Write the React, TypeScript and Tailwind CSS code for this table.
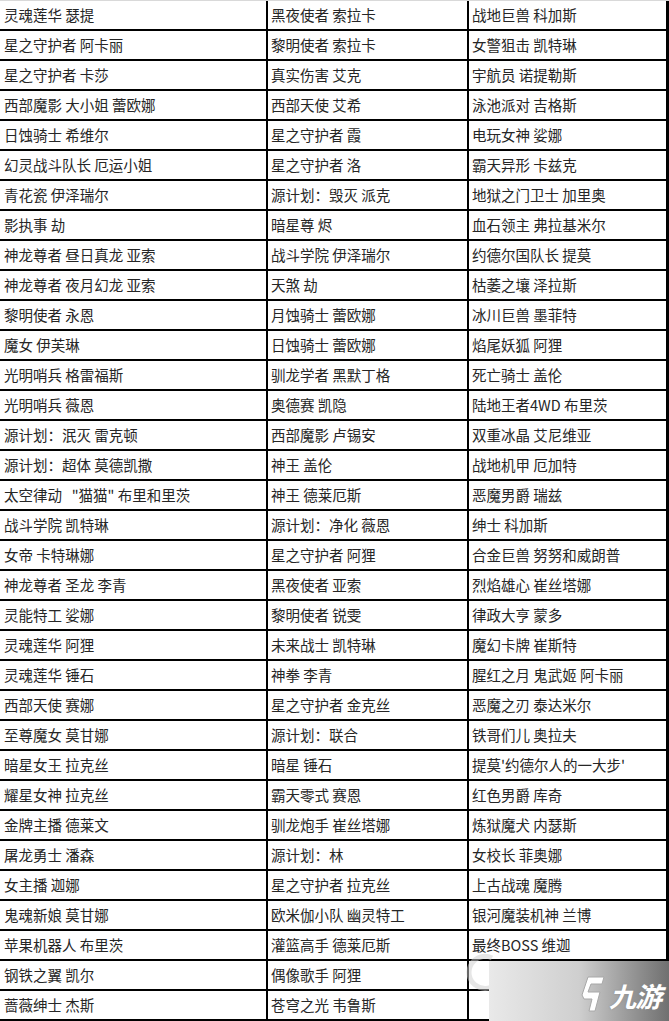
import React from "react";

const rows: [string, string, string][] = [
  ["灵魂莲华 瑟提", "黑夜使者 索拉卡", "战地巨兽 科加斯"],
  ["星之守护者 阿卡丽", "黎明使者 索拉卡", "女警狙击 凯特琳"],
  ["星之守护者 卡莎", "真实伤害 艾克", "宇航员 诺提勒斯"],
  ["西部魔影 大小姐 蕾欧娜", "西部天使 艾希", "泳池派对 吉格斯"],
  ["日蚀骑士 希维尔", "星之守护者 霞", "电玩女神 娑娜"],
  ["幻灵战斗队长 厄运小姐", "星之守护者 洛", "霸天异形 卡兹克"],
  ["青花瓷 伊泽瑞尔", "源计划：毁灭 派克", "地狱之门卫士 加里奥"],
  ["影执事 劫", "暗星尊 烬", "血石领主 弗拉基米尔"],
  ["神龙尊者 昼日真龙 亚索", "战斗学院 伊泽瑞尔", "约德尔国队长 提莫"],
  ["神龙尊者 夜月幻龙 亚索", "天煞 劫", "枯萎之壤 泽拉斯"],
  ["黎明使者 永恩", "月蚀骑士 蕾欧娜", "冰川巨兽 墨菲特"],
  ["魔女 伊芙琳", "日蚀骑士 蕾欧娜", "焰尾妖狐 阿狸"],
  ["光明哨兵 格雷福斯", "驯龙学者 黑默丁格", "死亡骑士 盖伦"],
  ["光明哨兵 薇恩", "奥德赛 凯隐", "陆地王者4WD 布里茨"],
  ["源计划：泯灭 雷克顿", "西部魔影 卢锡安", "双重冰晶 艾尼维亚"],
  ["源计划：超体 莫德凯撒", "神王 盖伦", "战地机甲 厄加特"],
  ["太空律动 \u00a0 \"猫猫\" 布里和里茨", "神王 德莱厄斯", "恶魔男爵 瑞兹"],
  ["战斗学院 凯特琳", "源计划：净化 薇恩", "绅士 科加斯"],
  ["女帝 卡特琳娜", "星之守护者 阿狸", "合金巨兽 努努和威朗普"],
  ["神龙尊者 圣龙 李青", "黑夜使者 亚索", "烈焰雄心 崔丝塔娜"],
  ["灵能特工 娑娜", "黎明使者 锐雯", "律政大亨 蒙多"],
  ["灵魂莲华 阿狸", "未来战士 凯特琳", "魔幻卡牌 崔斯特"],
  ["灵魂莲华 锤石", "神拳 李青", "腥红之月 鬼武姬 阿卡丽"],
  ["西部天使 赛娜", "星之守护者 金克丝", "恶魔之刃 泰达米尔"],
  ["至尊魔女 莫甘娜", "源计划：联合", "铁哥们儿 奥拉夫"],
  ["暗星女王 拉克丝", "暗星 锤石", "提莫'约德尔人的一大步'"],
  ["耀星女神 拉克丝", "霸天零式 赛恩", "红色男爵 库奇"],
  ["金牌主播 德莱文", "驯龙炮手 崔丝塔娜", "炼狱魔犬 内瑟斯"],
  ["屠龙勇士 潘森", "源计划：林", "女校长 菲奥娜"],
  ["女主播 迦娜", "星之守护者 拉克丝", "上古战魂 魔腾"],
  ["鬼魂新娘 莫甘娜", "欧米伽小队 幽灵特工", "银河魔装机神 兰博"],
  ["苹果机器人 布里茨", "灌篮高手 德莱厄斯", "最终BOSS 维迦"],
  ["钢铁之翼 凯尔", "偶像歌手 阿狸", ""],
  ["蔷薇绅士 杰斯", "苍穹之光 韦鲁斯", ""],
];

export default function App() {
  return (
    <div
      className="relative w-[669px] h-[1021px] overflow-hidden bg-white text-[14.5px] text-[#262626]"
      style={{ fontFamily: '"Noto Sans CJK SC", "Noto Sans", sans-serif' }}
    >
      <div className="border-t border-[#d9d9d9]">
        {rows.map((r, i) => (
          <div key={i} className="flex h-[30px] border-b-2 border-black">
            <div className="w-[268px] shrink-0 border-r-2 border-black pl-[4px] flex items-center whitespace-pre leading-none">
              {r[0]}
            </div>
            <div className="w-[201px] shrink-0 border-r-2 border-black pl-[3px] flex items-center whitespace-pre leading-none">
              {r[1]}
            </div>
            <div className="w-[200px] shrink-0 border-r-[3px] border-black pl-[3px] flex items-center whitespace-pre leading-none">
              {r[2]}
            </div>
          </div>
        ))}
      </div>

      {/* faint ghost watermark */}
      <svg className="absolute left-[462px] top-[952px] opacity-50" width="40" height="42" viewBox="0 0 40 42">
        <path d="M30 6 A16 16 0 1 0 34 32" fill="none" stroke="#cfcfcf" strokeWidth="5" />
      </svg>

      {/* watermark box */}
      <div className="absolute left-[489px] top-[961px] w-[180px] h-[60px] bg-gradient-to-r from-[#e9e9e9] via-[#cfcfcf] to-[#707070] flex items-center justify-end pr-[8px] gap-[3px]">
        <svg width="26" height="38" viewBox="0 0 26 38" className="mt-[6px]">
          <path
            d="M8 2 L24 2 L22 9 L11 9 L8 17 L20 17 L15 36 L9 36 L12 24 L4 24 L2 20 Z"
            fill="#ffffff"
            stroke="#a8a8a8"
            strokeWidth="1"
          />
        </svg>
        <span
          className="text-[27px] font-bold italic text-white leading-none mt-[8px] tracking-[-1px]"
          style={{ textShadow: "0 0 2px #8a8a8a" }}
        >
          九游
        </span>
      </div>
    </div>
  );
}
